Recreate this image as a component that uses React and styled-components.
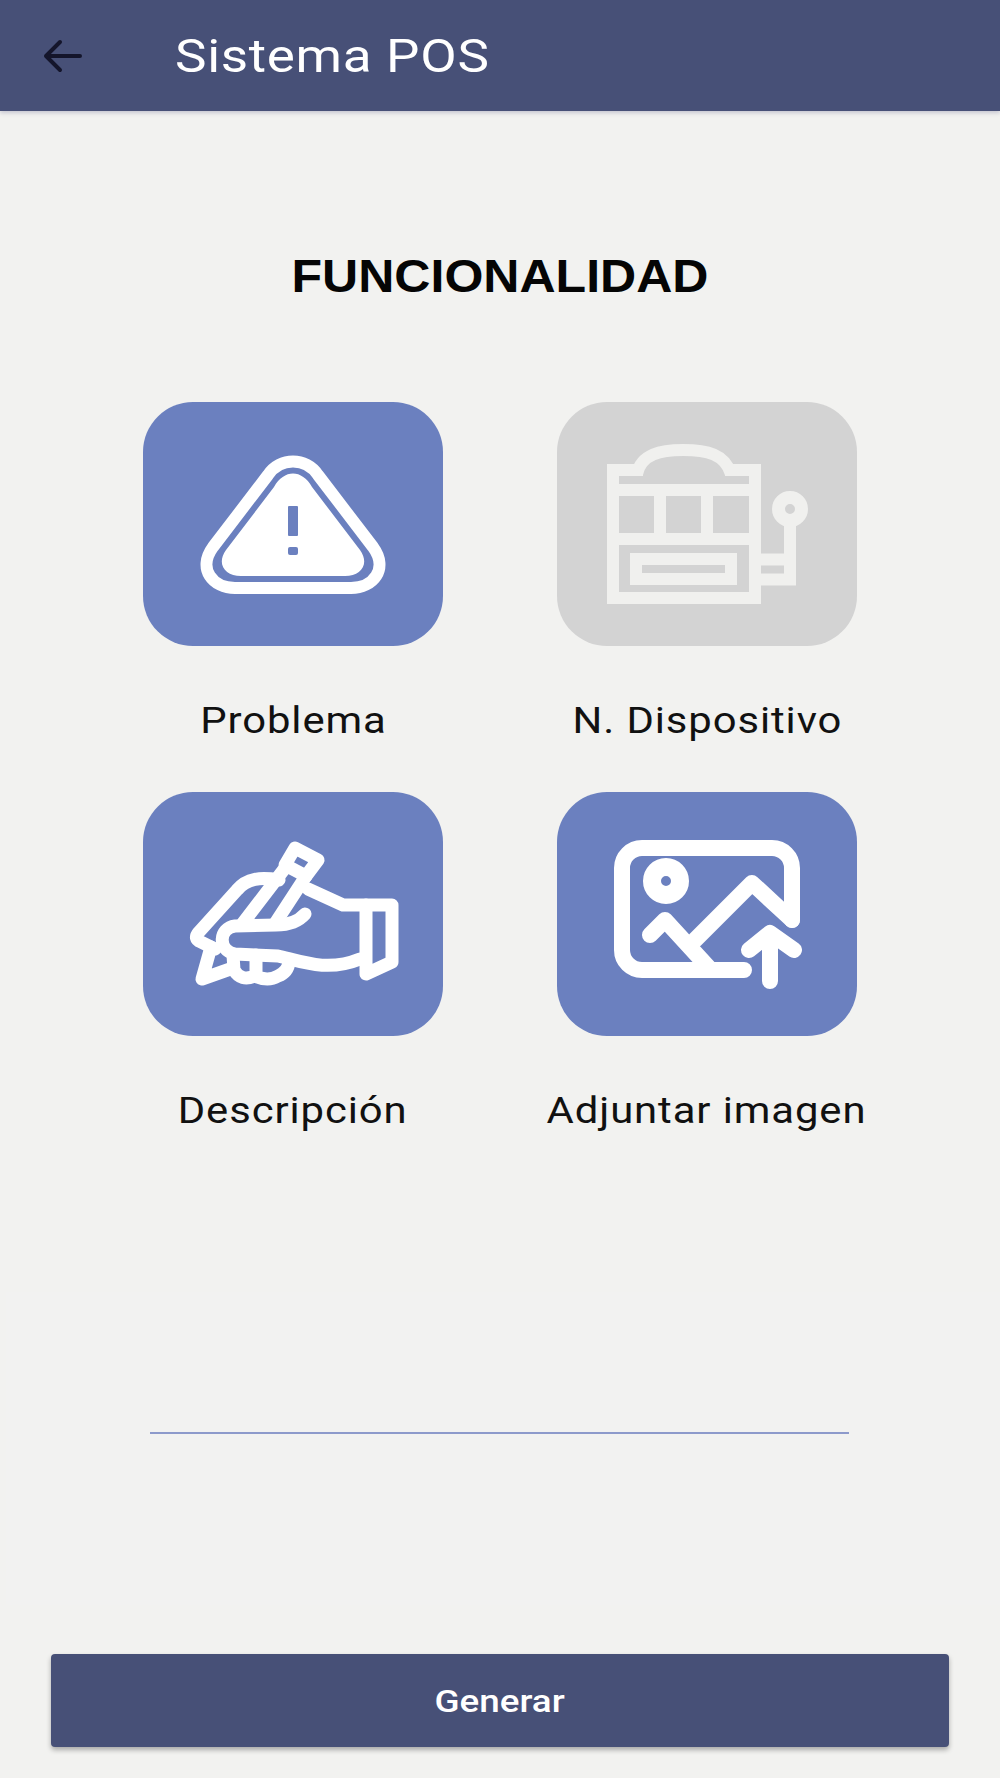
import React from 'react'
import styled, { createGlobalStyle } from 'styled-components'

const GlobalStyle = createGlobalStyle`
    html, body {
        margin: 0;
        padding: 0;
        background: #f2f2f0;
    }
    * {
        box-sizing: border-box;
    }
`

const Page = styled.div`
    width: 1000px;
    height: 1778px;
    display: flex;
    flex-direction: column;
    overflow: hidden;
    background: #f2f2f0;
    font-family: Roboto, "Liberation Sans", sans-serif;
`

const Header = styled.header`
    height: 111px;
    flex: none;
    display: flex;
    align-items: center;
    padding-left: 40px;
    background: #475077;
    box-shadow: 0 2px 4px rgba(70, 70, 120, 0.25);
`

const BackButton = styled.button`
    width: 44px;
    height: 40px;
    padding: 0;
    border: none;
    background: transparent;
    display: flex;
    align-items: center;
    justify-content: center;
`

const Title = styled.h1`
    margin: 0 0 0 91px;
    font-size: 46px;
    font-weight: 400;
    letter-spacing: 0.6px;
    color: #fff;
    transform: scaleX(1.152);
    transform-origin: left center;
`

const Heading = styled.h2`
    margin: 140px 0 0;
    height: 50px;
    line-height: 50px;
    text-align: center;
    font-family: "Liberation Sans", Arial, sans-serif;
    font-size: 46px;
    font-weight: 700;
    color: #050505;
    transform: scaleX(1.088);
`

const Grid = styled.div`
    margin-top: 101px;
    display: grid;
    grid-template-columns: 300px 300px;
    column-gap: 114px;
    row-gap: 0;
    justify-content: center;
`

const Item = styled.div`
    height: 390px;
    display: flex;
    flex-direction: column;
    align-items: center;
`

const Tile = styled.div`
    width: 300px;
    height: 244px;
    border-radius: 50px;
    background: ${(p) => (p.$disabled ? '#d3d3d3' : '#6b80bf')};
`

const Icon = styled.svg`
    display: block;
    width: 300px;
    height: 244px;
    fill: none;
    stroke: ${(p) => p.$color};
    stroke-width: ${(p) => p.$weight || 12}px;
    stroke-linecap: ${(p) => p.$cap || 'round'};
    stroke-linejoin: ${(p) => p.$join || 'round'};
`

const Label = styled.span`
    margin-top: 51px;
    font-size: 37px;
    line-height: 48px;
    letter-spacing: 0.8px;
    white-space: nowrap;
    color: #111;
    transform: scaleX(1.13);
`

const InputArea = styled.div`
    margin-top: 110px;
    margin-left: 6px;
    height: 313px;
    padding: 140px 151px 0 144px;
    background: #f2f2f1;
`

const Underlined = styled.input`
    display: block;
    width: 100%;
    height: 2px;
    padding: 0;
    border: none;
    background: #8d9acb;
`

const GenerateButton = styled.button`
    margin: 49px 51px 0;
    height: 93px;
    border: none;
    border-radius: 4px;
    background: #475077;
    color: #fff;
    font-family: Roboto, "Liberation Sans", sans-serif;
    font-size: 32px;
    font-weight: 500;
    box-shadow: 0 3px 5px rgba(0, 0, 0, 0.3);
`

const ButtonText = styled.span`
    display: inline-block;
    transform: scaleX(1.15);
`

const BLUE = '#6b80bf'
const WHITE = '#fff'
const PALE = '#f0f0ee'

const WarningIcon = () => (
    <Icon viewBox="0 0 300 244" $color={WHITE}>
        <path d="M125 73 C137 55 163 55 175 73 L230 145 C246 167 230 186 208 186 L92 186 C70 186 54 167 70 145 Z" />
        <path
            d="M131 85 C141 67 159 67 169 85 L217 148 C227 162 218 174 202 174 L98 174 C82 174 73 162 83 148 Z"
            fill={WHITE}
            stroke="none"
        />
        <rect x="145" y="104" width="10" height="30" rx="1" fill={BLUE} stroke="none" />
        <rect x="145" y="145" width="10" height="8" rx="2" fill={BLUE} stroke="none" />
    </Icon>
)

const SlotIcon = () => (
    <Icon viewBox="0 0 300 244" $color={PALE} $cap="butt" $join="miter">
        <path d="M86 68 H56 V196 H198 V68 H168" />
        <path d="M80 72 C84 52 104 48 126 48 C150 48 168 52 174 72" />
        <path d="M56 88 H198 M56 137 H198 M103 88 V137 M150 88 V137" />
        <rect x="79" y="157" width="95" height="20" />
        <circle cx="233" cy="107" r="11.5" strokeWidth="13" />
        <path d="M233 118 V177.5 H198 M198 157.5 H233" />
    </Icon>
)

const WritingIcon = () => (
    <Icon viewBox="0 0 300 244" $color={WHITE} $weight={13}>
        <path d="M152 56 L175 68 L163 84 L142 73 Z" />
        <path d="M142 76 L100 131 M163 84 L133 130" />
        <path d="M162 122 C155 130 145 133 133 133 L92 134 C76 136 74 158 92 162 L135 164 C160 170 185 180 217 167" />
        <path d="M136 88 C118 85 104 86 94 98 L56 140 Q50 147 58 150 L72 157" />
        <path d="M68 155 L59 187 L90 176" />
        <path d="M90 163 L91 178 Q98 190 112 184 Q125 190 135 184 Q145 180 146 170 M113 163 V184" />
        <path d="M165 97 L200 113 H223" />
        <path d="M223 113 H249 V170 L223 182 Z" />
    </Icon>
)

const UploadImageIcon = () => (
    <Icon viewBox="0 0 300 244" $color={WHITE} $weight={16}>
        <path d="M235 128 V76 A20 20 0 0 0 215 56 H85 A20 20 0 0 0 65 76 V158 A20 20 0 0 0 85 178 H187" />
        <path d="M235 128 L195 91 L138 148" />
        <path d="M93 143 L108 128 L152 176" />
        <circle cx="109" cy="89" r="14" strokeWidth="18" />
        <path d="M213 189 V145 M192 158 L213 141 L237 158" />
    </Icon>
)

const items = [
    { label: 'Problema', icon: <WarningIcon /> },
    { label: 'N. Dispositivo', icon: <SlotIcon />, disabled: true },
    { label: 'Descripción', icon: <WritingIcon /> },
    { label: 'Adjuntar imagen', icon: <UploadImageIcon /> },
]

export default function App() {
    return (
        <Page>
            <GlobalStyle />
            <Header>
                <BackButton aria-label="Volver">
                    <svg width="44" height="40" viewBox="0 0 44 40" fill="none" stroke="#14152b" strokeWidth="4" strokeLinecap="round" strokeLinejoin="round">
                        <path d="M40 20 H6 M20 6 L6 20 L20 34" />
                    </svg>
                </BackButton>
                <Title>Sistema POS</Title>
            </Header>
            <Heading>FUNCIONALIDAD</Heading>
            <Grid>
                {items.map((item) => (
                    <Item key={item.label}>
                        <Tile $disabled={item.disabled}>{item.icon}</Tile>
                        <Label>{item.label}</Label>
                    </Item>
                ))}
            </Grid>
            <InputArea>
                <Underlined aria-label="Valor" />
            </InputArea>
            <GenerateButton>
                <ButtonText>Generar</ButtonText>
            </GenerateButton>
        </Page>
    )
}
